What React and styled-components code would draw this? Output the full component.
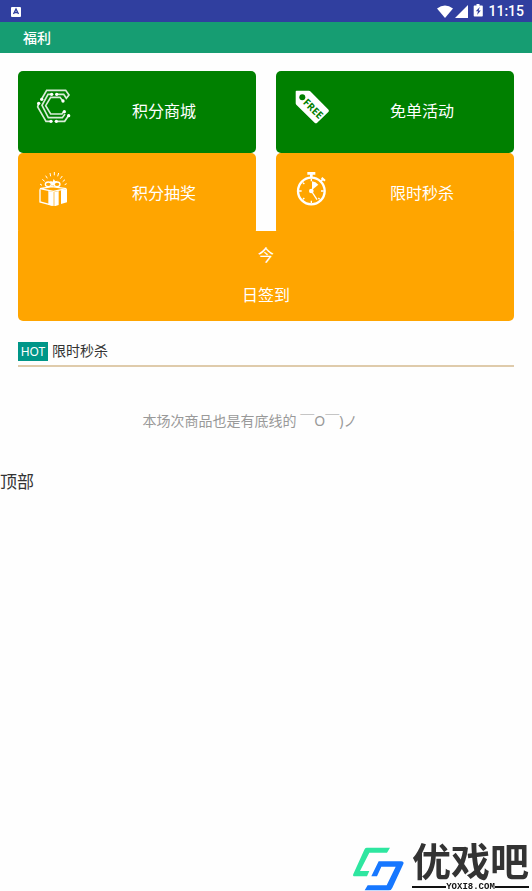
import React from "react";
import styled, { createGlobalStyle } from "styled-components";

const GlobalStyle = createGlobalStyle`
  *, *::before, *::after { box-sizing: border-box; }
  body {
    margin: 0;
    background: #fefefe;
    color: #333;
    font-family: "Noto Sans CJK SC", "Noto Sans", sans-serif;
    font-size: 14px;
  }
  h1, h2, p { margin: 0; font-weight: 400; }
`;

const Page = styled.div`
  min-height: 100vh;
`;

const StatusBar = styled.div`
  display: flex;
  align-items: center;
  justify-content: space-between;
  height: 22px;
  padding: 0 8px 0 11px;
  background: #303f9f;
  color: #fff;
`;

const StatusIcons = styled.div`
  display: flex;
  align-items: center;
  gap: 2px;
`;

const Clock = styled.span`
  font: 500 14px/22px Roboto, sans-serif;
`;

const TitleBar = styled.header`
  display: flex;
  align-items: center;
  height: 31px;
  padding: 0 23px 2px;
  background: #169d72;
  color: #fff;
`;

const Title = styled.h1`
  && { font-size: 14px; font-weight: 500; }
`;

const Main = styled.main`
  padding: 18px 18px 0;
`;

const CardGrid = styled.nav`
  display: grid;
  grid-template-columns: 1fr 1fr;
  column-gap: 20px;
`;

const Card = styled.button`
  display: flex;
  align-items: flex-start;
  height: 82px;
  padding: 17px 0 0 18px;
  border: 0;
  border-radius: 5px;
  background: ${(p) => p.$color};
  color: #fff;
  font-family: inherit;
  font-size: 16px;
  line-height: 44px;
  cursor: pointer;

  svg { flex: none; width: 36px; height: 36px; }
  span { flex: 1; text-align: center; }
`;

const SignIn = styled.button`
  display: block;
  width: 100%;
  margin-top: -4px;
  padding: 3px 0 7px;
  border: 0;
  border-radius: 0 0 5px 5px;
  background: #ffa500;
  color: #fff;
  font-family: inherit;
  font-size: 16px;
  line-height: 40px;
  cursor: pointer;

  span { display: block; }
`;

const SectionHead = styled.div`
  display: flex;
  align-items: center;
  gap: 4px;
  height: 30px;
  margin-top: 16px;
  padding-bottom: 3px;
  border-bottom: 2px solid #dfcbab;
`;

const HotTag = styled.span`
  flex: none;
  width: 30px;
  margin-top: 3px;
  background: #009688;
  color: #fff;
  font: 12px/19px "Noto Sans", sans-serif;
  text-align: center;
`;

const SectionTitle = styled.h2`
  font-size: 14px;
  line-height: 20px;
`;

const EndNote = styled.p`
  margin-top: 43px;
  padding-right: 32px;
  color: #999;
  font-family: "Noto Sans", "Noto Sans CJK SC", sans-serif;
  line-height: 22px;
  text-align: center;
`;

const TopLink = styled.a`
  display: block;
  margin-top: 36px;
  color: #333;
  font-size: 17px;
  line-height: 26px;
  text-decoration: none;
`;

const Brand = styled.div`
  position: fixed;
  right: 3px;
  bottom: 0;
  display: flex;
  align-items: flex-end;
  gap: 8px;

  svg { width: 52px; height: 44px; }
`;

const BrandName = styled.div`
  margin-bottom: 6px;
  color: #333;
  font-size: 39px;
  font-weight: 700;
  line-height: 36px;
`;

const BrandSite = styled.div`
  display: flex;
  align-items: center;
  color: #111;
  font: bold 9px/8px "Liberation Mono", monospace;

  &::before, &::after {
    content: "";
    flex: 1;
    height: 2px;
    background: #111;
  }
`;

const CircuitIcon = () => (
  <svg viewBox="0 0 108 108" fill="none" stroke="#fff" strokeOpacity="0.85" strokeWidth="5" aria-hidden="true">
    <path d="M17 33 32 7h57l10 14-8 10-8-12H62" />
    <path d="M47 19H36L18 52l19 37h42l8-11" />
    <path d="M80 38 72 28H44L29 53l15 25h34l6-8" />
    <path d="M8 46 5 57l25 43h15M61 100h25l13-19" />
    <g fill="#fff" stroke="none">
      <circle cx="17" cy="34" r="5" /><circle cx="47" cy="19" r="5" />
      <circle cx="62" cy="19" r="5" /><circle cx="81" cy="39" r="5" />
      <circle cx="8" cy="46" r="5" /><circle cx="45" cy="100" r="5" />
      <circle cx="61" cy="100" r="5" /><circle cx="85" cy="71" r="5" />
      <circle cx="98" cy="83" r="5" />
    </g>
  </svg>
);

const FreeTagIcon = () => (
  <svg viewBox="0 0 36 36" aria-hidden="true">
    <path fill="#fff" d="M2.500 2.700h12.300c.7 0 1.200.2 1.700.7L34.300 21.400c.8.8.8 1.800 0 2.600L23.200 34.700c-.8.8-1.800.8-2.600 0L2.300 16.700c-.4-.4-.6-.8-.6-1.400V3.500c0-.5.3-.8.800-.8z" />
    <circle cx="8.300" cy="9.300" r="3" fill="#008000" />
    <text x="19.500" y="20.500" transform="rotate(45 19.500 20.500)" textAnchor="middle" dominantBaseline="central" fontFamily="Open Sans, sans-serif" fontSize="10" fontWeight="700" fill="#008000">FREE</text>
  </svg>
);

const GiftIcon = () => (
  <svg viewBox="0 0 108 108" fill="none" stroke="#fff" strokeWidth="4" aria-hidden="true">
    <path d="M12 42l6 4M19 28l7 6M29 17l5 8M42 9l2 10M55 6v10M68 9l-3 10M79 18l-6 8M87 29l-7 6M92 41l-6 3" strokeWidth="3" />
    <ellipse cx="37" cy="43" rx="9" ry="7" />
    <ellipse cx="63" cy="43" rx="9" ry="7" />
    <path d="M50 49 42 32l8 3 3-8 5 7 7-2z" fill="#fff" stroke="none" />
    <path d="M12 56 48 50l43 6-39 8z" />
    <path d="M12 58v38l38 10" />
    <path d="M37 63l16 3v42l-16-4z" fill="#fff" stroke="none" />
    <path d="M55 66l13-3v42l-13 4zM75 61l18-4v40l-18 5z" fill="#fff" stroke="none" />
  </svg>
);

const StopwatchIcon = () => (
  <svg viewBox="0 0 108 108" fill="none" stroke="#fff" aria-hidden="true">
    <circle cx="52" cy="63" r="40" strokeWidth="7" />
    <path d="M40 10h24M52 10v14" strokeWidth="8" />
    <path d="M80 34l8-8M83 23l10 9" strokeWidth="6" />
    <path d="M52 26v8M52 92v8M15 63h8M81 63h8M27 38l4 4M77 88l-4-4M27 88l4-4" strokeWidth="4" />
    <path d="M54 60V34q11 1 19 10z" fill="#fff" stroke="none" />
    <circle cx="52" cy="63" r="7" fill="#fff" stroke="none" />
    <path d="M54 66l15 23" strokeWidth="4" />
  </svg>
);

const BrandMark = () => (
  <svg viewBox="0 0 156 132" aria-hidden="true">
    <path fill="#2ee6a0" d="M44 2h70l-9 15H52L24 72h28l-7 16H8q-7 0-4-7L37 8q2-6 7-6z" />
    <path fill="#1677ff" d="M80 43h68q9 0 6 8l-33 71q-3 8-10 8H38l9-15h57l27-56H88L75 88H58z" />
  </svg>
);

const cards = [
  { label: "积分商城", color: "#008000", Icon: CircuitIcon },
  { label: "免单活动", color: "#008000", Icon: FreeTagIcon },
  { label: "积分抽奖", color: "#ffa500", Icon: GiftIcon },
  { label: "限时秒杀", color: "#ffa500", Icon: StopwatchIcon },
];

export default function App() {
  return (
    <Page id="top">
      <GlobalStyle />
      <StatusBar>
        <svg width="10" height="11" viewBox="0 0 10 11" aria-hidden="true">
          <rect y="1" width="10" height="10" rx="1" fill="#fff" />
          <path d="M2.500 8 5 3l2.500 5M3.500 6.500h3" fill="none" stroke="#303f9f" strokeWidth="1.300" />
        </svg>
        <StatusIcons>
          <svg width="16" height="13" viewBox="0 0 16 13" aria-hidden="true">
            <path d="M0 3.500Q8-2.500 16 3.500L8 13z" fill="#fff" />
          </svg>
          <svg width="13" height="13" viewBox="0 0 13 13" aria-hidden="true">
            <path d="M13 0v13H0z" fill="#fff" />
          </svg>
          <svg width="16" height="14" viewBox="0 0 16 14" aria-hidden="true">
            <path d="M6.500 0h3v1.500h2.500q.8 0 .8.8v9.400q0 .8-.8.8H4.500q-.8 0-.8-.8V2.300q0-.8.8-.8h2z" fill="#fff" />
            <path d="M9.800 3 5.800 7.300h2.200L7.100 11 10.800 6.500H8.600z" fill="#303f9f" />
          </svg>
          <Clock>11:15</Clock>
        </StatusIcons>
      </StatusBar>
      <TitleBar>
        <Title>福利</Title>
      </TitleBar>
      <Main>
        <CardGrid>
          {cards.map(({ label, color, Icon }) => (
            <Card key={label} type="button" $color={color}>
              <Icon />
              <span>{label}</span>
            </Card>
          ))}
        </CardGrid>
        <SignIn type="button">
          <span>今</span>
          <span>日签到</span>
        </SignIn>
        <SectionHead>
          <HotTag>HOT</HotTag>
          <SectionTitle>限时秒杀</SectionTitle>
        </SectionHead>
        <EndNote>本场次商品也是有底线的 ￣O￣)ノ</EndNote>
      </Main>
      <TopLink href="#top">顶部</TopLink>
      <Brand>
        <BrandMark />
        <div>
          <BrandName>优戏吧</BrandName>
          <BrandSite>YOXI8.COM</BrandSite>
        </div>
      </Brand>
    </Page>
  );
}
